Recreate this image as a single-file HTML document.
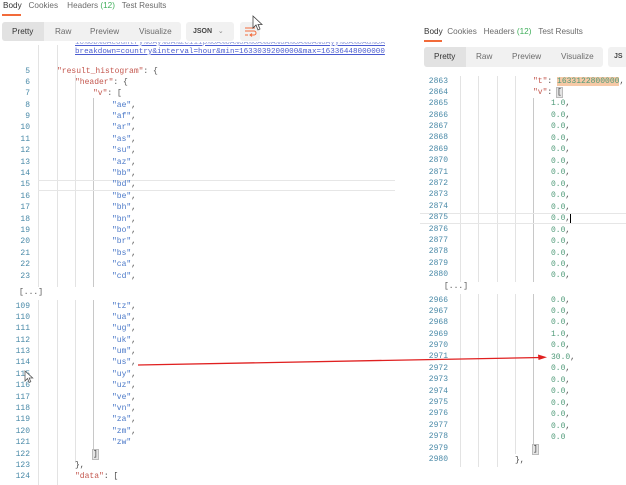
<!DOCTYPE html>
<html><head><style>
*{margin:0;padding:0;box-sizing:border-box}
body{width:626px;height:485px;background:#fff;position:relative;overflow:hidden;font-family:"Liberation Sans",sans-serif;}
.a{position:absolute}
.tab{position:absolute;font-size:8.2px;color:#6b6b6b;white-space:nowrap}
.tab b{font-weight:normal;color:#333}
.tab i{font-style:normal;color:#3fae5a}
.code{position:absolute;font-family:"Liberation Mono",monospace;font-size:8px;white-space:pre;color:#444}
.code div{height:11.4px;line-height:11.4px}
.r .code div,.r div{height:11.47px;line-height:11.47px}
.ln{position:absolute;font-family:"Liberation Mono",monospace;font-size:8px;color:#4a8aa8;text-align:right;width:30px}
.ln div{height:11.4px;line-height:11.4px}
.s{color:#4a78c8}.k{color:#c4584f}.n{color:#4f9a78}.p{color:#555}
.g{position:absolute;width:1px;background:#e3e3e3}
.gd{position:absolute;width:1px;background:#c8c8c8}
.i1{padding-left:18px}.i2{padding-left:36px}.i3{padding-left:55px}
.j1{padding-left:18px}.jm{margin-left:-18px}
</style></head><body>

<div class="tab" style="left:3px;top:1px"><b>Body</b>&nbsp;&nbsp;&nbsp;Cookies&nbsp;&nbsp;&nbsp;&nbsp;Headers <i>(12)</i>&nbsp;&nbsp;&nbsp;Test Results</div>
<div class="a" style="left:2px;top:14px;width:19px;height:2px;background:#f26b3a"></div>
<div class="a" style="left:2px;top:22px;width:179px;height:19px;background:#f1f1f1;border-radius:3px"></div>
<div class="a" style="left:2px;top:22px;width:42px;height:19px;background:#e2e2e2;border-radius:3px 0 0 3px"></div>
<div class="tab" style="left:12px;top:27px;color:#333">Pretty</div>
<div class="tab" style="left:55px;top:27px">Raw</div>
<div class="tab" style="left:90px;top:27px">Preview</div>
<div class="tab" style="left:139px;top:27px">Visualize</div>
<div class="a" style="left:186px;top:22px;width:48px;height:19px;background:#f1f1f1;border-radius:3px"></div>
<div class="tab" style="left:193px;top:27px;font-size:7px;color:#444;font-weight:bold">JSON&nbsp;&nbsp;&nbsp;<span style="font-weight:normal;color:#888">⌄</span></div>
<div class="a" style="left:240px;top:22px;width:20px;height:19px;background:#f1f1f1;border-radius:3px"></div>
<svg class="a" style="left:244px;top:26px" width="13" height="11"><path d="M1 2h10M1 5h9a2 2 0 0 1 0 4H6M8 7.5L6 9l2 1.5M1 9h3" stroke="#f26b3a" stroke-width="1" fill="none"/></svg>
<svg class="a" style="left:252px;top:15px" width="12" height="16"><path d="M1 1v12l3-3 2 5 2-1-2-4.5h4z" fill="#fff" stroke="#444" stroke-width="0.8"/></svg>

<div class="g" style="left:38px;top:45px;height:242px"></div>
<div class="g" style="left:57px;top:45px;height:242px"></div>
<div class="g" style="left:75px;top:75px;height:212px"></div>
<div class="gd" style="left:93px;top:98px;height:189px"></div>
<div class="g" style="left:38px;top:300px;height:185px"></div>
<div class="g" style="left:57px;top:300px;height:185px"></div>
<div class="g" style="left:75px;top:300px;height:163px"></div>
<div class="gd" style="left:93px;top:300px;height:152px"></div>
<div class="a" style="left:38px;top:180px;width:357px;height:11px;border-top:1px solid #e6e6e6;border-bottom:1px solid #e6e6e6"></div>

<div class="code" style="left:75px;top:42px;width:310px;overflow:hidden;font-size:7.6px;color:#4a5bd0;text-decoration:underline"><div style="height:5px;line-height:3px;overflow:hidden;color:#8a96d8">10%0D%0Acountry%0Ay%0A%2C111p%0A%0A%0A%0A%0A%0A%0A%0A%0Ayy%0A%0Au%0Aency%0Acts%0A%0A%0A</div><div>breakdown=country&amp;interval=hour&amp;min=1633039200000&amp;max=16336448000000</div></div>

<div class="ln" style="left:0;top:65.5px"><div>5</div><div>6</div><div>7</div><div>8</div><div>9</div><div>10</div><div>11</div><div>12</div><div>13</div><div>14</div><div>15</div><div>16</div><div>17</div><div>18</div><div>19</div><div>20</div><div>21</div><div>22</div><div>23</div></div>
<div class="code" style="left:57px;top:65.5px"><div><span class="k">"result_histogram"</span><span class="p">: {</span></div><div class="i1"><span class="k">"header"</span><span class="p">: {</span></div><div class="i2"><span class="k">"v"</span><span class="p">: [</span></div><div class="i3"><span class="s">"ae"</span>,</div><div class="i3"><span class="s">"af"</span>,</div><div class="i3"><span class="s">"ar"</span>,</div><div class="i3"><span class="s">"as"</span>,</div><div class="i3"><span class="s">"su"</span>,</div><div class="i3"><span class="s">"az"</span>,</div><div class="i3"><span class="s">"bb"</span>,</div><div class="i3"><span class="s">"bd"</span>,</div><div class="i3"><span class="s">"be"</span>,</div><div class="i3"><span class="s">"bh"</span>,</div><div class="i3"><span class="s">"bn"</span>,</div><div class="i3"><span class="s">"bo"</span>,</div><div class="i3"><span class="s">"br"</span>,</div><div class="i3"><span class="s">"bs"</span>,</div><div class="i3"><span class="s">"ca"</span>,</div><div class="i3"><span class="s">"cd"</span>,</div></div>

<div class="code" style="left:19px;top:288px;color:#555">[...]</div>

<div class="ln" style="left:0;top:300.5px"><div>109</div><div>110</div><div>111</div><div>112</div><div>113</div><div>114</div><div>115</div><div>116</div><div>117</div><div>118</div><div>119</div><div>120</div><div>121</div><div>122</div><div>123</div><div>124</div></div>
<div class="code" style="left:57px;top:300.5px"><div class="i3"><span class="s">"tz"</span>,</div><div class="i3"><span class="s">"ua"</span>,</div><div class="i3"><span class="s">"ug"</span>,</div><div class="i3"><span class="s">"uk"</span>,</div><div class="i3"><span class="s">"um"</span>,</div><div class="i3"><span class="s">"us"</span>,</div><div class="i3"><span class="s">"uy"</span>,</div><div class="i3"><span class="s">"uz"</span>,</div><div class="i3"><span class="s">"ve"</span>,</div><div class="i3"><span class="s">"vn"</span>,</div><div class="i3"><span class="s">"za"</span>,</div><div class="i3"><span class="s">"zm"</span>,</div><div class="i3"><span class="s">"zw"</span></div><div class="i2"><span style="background:#e4e4e4;outline:1px solid #bbb">]</span></div><div class="i1">},</div><div class="i1"><span class="k">"data"</span>: [</div></div>
<svg class="a" style="left:24px;top:370px" width="10" height="14"><path d="M1 1v10l2.5-2.5 1.7 4 1.6-.8-1.6-3.7h3.5z" fill="#fff" stroke="#555" stroke-width="0.8"/></svg>

<div class="tab" style="left:424px;top:27px"><b>Body</b>&nbsp;&nbsp;Cookies&nbsp;&nbsp;&nbsp;Headers <i>(12)</i>&nbsp;&nbsp;&nbsp;Test Results</div>
<div class="a" style="left:424px;top:40px;width:18px;height:2px;background:#f26b3a"></div>
<div class="a" style="left:424px;top:47px;width:179px;height:20px;background:#f1f1f1;border-radius:3px"></div>
<div class="a" style="left:424px;top:47px;width:42px;height:20px;background:#e2e2e2;border-radius:3px 0 0 3px"></div>
<div class="tab" style="left:434px;top:52px;color:#333">Pretty</div>
<div class="tab" style="left:476px;top:52px">Raw</div>
<div class="tab" style="left:512px;top:52px">Preview</div>
<div class="tab" style="left:561px;top:52px">Visualize</div>
<div class="a" style="left:608px;top:47px;width:20px;height:20px;background:#f1f1f1;border-radius:3px"></div>
<div class="tab" style="left:614px;top:53px;font-size:7px;color:#444;font-weight:bold">JS</div>

<div class="g" style="left:460px;top:76px;height:206px"></div>
<div class="g" style="left:478px;top:76px;height:206px"></div>
<div class="g" style="left:497px;top:76px;height:206px"></div>
<div class="g" style="left:515px;top:76px;height:206px"></div>
<div class="gd" style="left:533px;top:98px;height:184px"></div>
<div class="g" style="left:460px;top:294px;height:173px"></div>
<div class="g" style="left:478px;top:294px;height:173px"></div>
<div class="g" style="left:497px;top:294px;height:173px"></div>
<div class="g" style="left:515px;top:294px;height:160px"></div>
<div class="gd" style="left:533px;top:294px;height:154px"></div>
<div class="a" style="left:420px;top:213px;width:206px;height:11px;border-top:1px solid #e6e6e6;border-bottom:1px solid #e6e6e6"></div>

<div class="r">
<div class="ln" style="left:418px;top:75.5px"><div>2863</div><div>2864</div><div>2865</div><div>2866</div><div>2867</div><div>2868</div><div>2869</div><div>2870</div><div>2871</div><div>2872</div><div>2873</div><div>2874</div><div>2875</div><div>2876</div><div>2877</div><div>2878</div><div>2879</div><div>2880</div></div>
<div class="code" style="left:533px;top:75.5px"><div><span class="k">"t"</span>: <span class="n" style="background:#f6c9a6">1633122800000</span>,</div><div><span class="k">"v"</span>: <span style="background:#e4e4e4;outline:1px solid #bbb">[</span></div><div class="j1"><span class="n">1.0</span>,</div><div class="j1"><span class="n">0.0</span>,</div><div class="j1"><span class="n">0.0</span>,</div><div class="j1"><span class="n">0.0</span>,</div><div class="j1"><span class="n">0.0</span>,</div><div class="j1"><span class="n">0.0</span>,</div><div class="j1"><span class="n">0.0</span>,</div><div class="j1"><span class="n">0.0</span>,</div><div class="j1"><span class="n">0.0</span>,</div><div class="j1"><span class="n">0.0</span>,</div><div class="j1"><span class="n">0.0</span>,<span style="border-left:1px solid #000"></span></div><div class="j1"><span class="n">0.0</span>,</div><div class="j1"><span class="n">0.0</span>,</div><div class="j1"><span class="n">0.0</span>,</div><div class="j1"><span class="n">0.0</span>,</div><div class="j1"><span class="n">0.0</span>,</div></div>

<div class="code" style="left:444px;top:281px;color:#555">[...]</div>

<div class="ln" style="left:418px;top:294.5px"><div>2966</div><div>2967</div><div>2968</div><div>2969</div><div>2970</div><div>2971</div><div>2972</div><div>2973</div><div>2974</div><div>2975</div><div>2976</div><div>2977</div><div>2978</div><div>2979</div><div>2980</div></div>
<div class="code" style="left:533px;top:294.5px"><div class="j1"><span class="n">0.0</span>,</div><div class="j1"><span class="n">0.0</span>,</div><div class="j1"><span class="n">0.0</span>,</div><div class="j1"><span class="n">1.0</span>,</div><div class="j1"><span class="n">0.0</span>,</div><div class="j1"><span class="n">30.0</span>,</div><div class="j1"><span class="n">0.0</span>,</div><div class="j1"><span class="n">0.0</span>,</div><div class="j1"><span class="n">0.0</span>,</div><div class="j1"><span class="n">0.0</span>,</div><div class="j1"><span class="n">0.0</span>,</div><div class="j1"><span class="n">0.0</span>,</div><div class="j1"><span class="n">0.0</span></div><div><span style="background:#e4e4e4;outline:1px solid #bbb">]</span></div><div class="jm">},</div></div>
</div>

<svg class="a" style="left:0;top:0" width="626" height="485"><line x1="138" y1="365" x2="541" y2="357.5" stroke="#e02020" stroke-width="1.3"/><path d="M547 357.3L538 354.5L538.5 360z" fill="#e02020"/></svg>
</body></html>
